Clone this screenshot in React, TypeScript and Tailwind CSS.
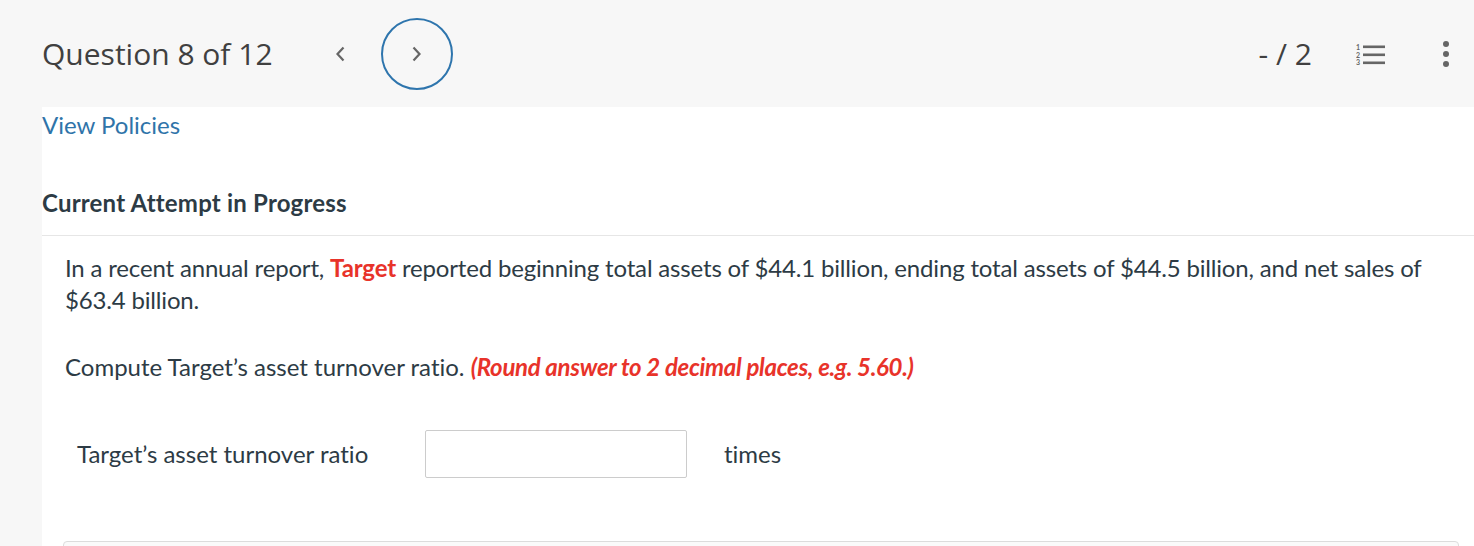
import React from 'react';

const lato = { fontFamily: 'Lato, "Liberation Sans", sans-serif' };

function ListIcon() {
  return (
    <svg width="32" height="22" viewBox="0 0 32 22" className="text-[#666]">
      <text x="0" y="6.5" fontSize="7" fontFamily="Lato, sans-serif" fontWeight="700" fill="currentColor">1</text>
      <text x="0" y="14.5" fontSize="7" fontFamily="Lato, sans-serif" fontWeight="700" fill="currentColor">2</text>
      <text x="0" y="22" fontSize="7" fontFamily="Lato, sans-serif" fontWeight="700" fill="currentColor">3</text>
      <rect x="7" y="2.5" width="22" height="2.6" fill="currentColor" />
      <rect x="7" y="10.5" width="22" height="2.6" fill="currentColor" />
      <rect x="7" y="18.5" width="22" height="2.6" fill="currentColor" />
    </svg>
  );
}

export default function App() {
  return (
    <div className="w-[1474px] h-[546px] overflow-hidden bg-[#f7f7f7]">
      <header className="h-[107px] flex items-center pl-[42px] pr-[20px] bg-[#f7f7f7]">
        <h1
          className="text-[30px] text-[#404040]"
          style={{ fontFamily: '"Open Sans", "Noto Sans", sans-serif' }}
        >
          Question 8 of 12
        </h1>
        <button className="ml-[54px] w-[26px] h-[26px] flex items-center justify-center text-[#666]">
          <svg width="12" height="18" viewBox="0 0 12 18">
            <path d="M9.5 2.5 L3.5 9 L9.5 15.5" fill="none" stroke="currentColor" strokeWidth="2.2" />
          </svg>
        </button>
        <button className="ml-[28px] w-[72px] h-[72px] rounded-full border-[2.5px] border-[#2e75ad] flex items-center justify-center text-[#666]">
          <svg width="12" height="18" viewBox="0 0 12 18">
            <path d="M2.5 2.5 L8.5 9 L2.5 15.5" fill="none" stroke="currentColor" strokeWidth="2.2" />
          </svg>
        </button>
        <div className="flex-1" />
        <span
          className="text-[30px] text-[#404040]"
          style={{ fontFamily: '"Open Sans", "Noto Sans", sans-serif' }}
        >
          - / 2
        </span>
        <button className="ml-[44px] flex items-center">
          <ListIcon />
        </button>
        <button className="ml-[55px] mr-[5px] flex flex-col gap-[4px] items-center">
          <span className="w-[6px] h-[6px] rounded-full bg-[#666]" />
          <span className="w-[6px] h-[6px] rounded-full bg-[#666]" />
          <span className="w-[6px] h-[6px] rounded-full bg-[#666]" />
        </button>
      </header>

      <div className="flex h-[439px]">
        <div className="w-[42px] bg-[#f7f7f7]" />
        <main className="flex-1 bg-white [font-variant-ligatures:none]" style={lato}>
          <a className="block pt-[4px] text-[24px] leading-[28px] text-[#2f74a9]">View Policies</a>
          <h2 className="mt-[50px] text-[24px] leading-[28px] font-bold text-[#2d3b45] tracking-[0.2px]">
            Current Attempt in Progress
          </h2>
          <div className="mt-[18px] border-t border-[#e6e6e6]" />
          <div className="pl-[23px] pr-[15px] pt-[16px] text-[24px] leading-[32px] text-[#2d3b45]">
            <p className="tracking-[-0.17px]">
              In a recent annual report, <span className="font-bold text-[#e8332a]">Target</span> reported
              beginning total assets of $44.1 billion, ending total assets of $44.5 billion, and net sales of
              $63.4 billion.
            </p>
            <p className="mt-[35px]">
              Compute Target’s asset turnover ratio.{' '}
              <span className="font-bold italic text-[#e8332a] tracking-[-0.3px]">
                (Round answer to 2 decimal places, e.g. 5.60.)
              </span>
            </p>
            <div className="mt-[47px] flex items-center pl-[12px]">
              <span className="w-[348px]">Target’s asset turnover ratio</span>
              <input
                className="w-[262px] h-[48px] border border-[#cccccc] rounded-[2px] bg-white"
                type="text"
              />
              <span className="ml-[37px]">times</span>
            </div>
            <div className="mt-[63px] -ml-[2px] h-[40px] border border-[#dcdcdc] rounded-t-[4px] bg-[#fafafa]" />
          </div>
        </main>
      </div>
    </div>
  );
}
